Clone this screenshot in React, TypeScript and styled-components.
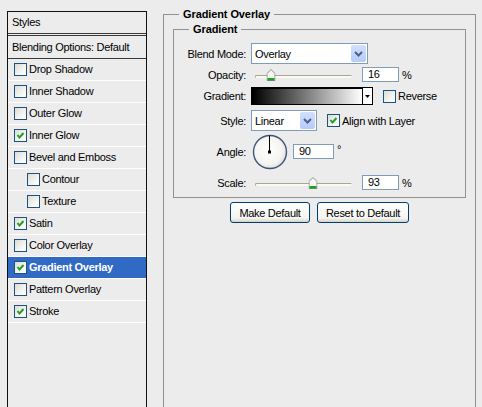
import styled, { createGlobalStyle } from "styled-components";

const GlobalStyle = createGlobalStyle`
  html, body {
    margin: 0;
    padding: 0;
    background: #ececec;
    overflow: hidden;
  }
  body {
    font-family: "Liberation Sans", Arial, sans-serif;
    font-size: 11px;
    letter-spacing: -0.3px;
    color: #000;
  }
  * {
    box-sizing: border-box;
  }
`;

const STYLES = [
  { label: "Drop Shadow", checked: false },
  { label: "Inner Shadow", checked: false },
  { label: "Outer Glow", checked: false },
  { label: "Inner Glow", checked: true },
  { label: "Bevel and Emboss", checked: false },
  { label: "Contour", checked: false, sub: true },
  { label: "Texture", checked: false, sub: true },
  { label: "Satin", checked: true },
  { label: "Color Overlay", checked: false },
  { label: "Gradient Overlay", checked: true, selected: true },
  { label: "Pattern Overlay", checked: false },
  { label: "Stroke", checked: true },
];

// slider value -> percent of track
const pos = (v: number, min: number, max: number) => ((v - min) / (max - min)) * 100;

function Check({ checked }: { checked?: boolean }) {
  return (
    <CheckBox>
      {checked && (
        <svg width="11" height="11" viewBox="0 0 11 11">
          <path d="M2.5 5 L4.5 7.5 L8.5 3" fill="none" stroke="#21a121" strokeWidth="2" />
        </svg>
      )}
    </CheckBox>
  );
}

function DropSelect({ value, width }: { value: string; width: number }) {
  return (
    <Select $w={width}>
      <span>{value}</span>
      <DropButton>
        <svg width="9" height="6" viewBox="0 0 9 6">
          <path d="M1 1 L4.5 4.5 L8 1" fill="none" stroke="#4d6185" strokeWidth="2" />
        </svg>
      </DropButton>
    </Select>
  );
}

function Slider({ percent }: { percent: number }) {
  return (
    <SliderWrap>
      <Track />
      <Thumb style={{ left: `${percent}%` }}>
        <svg width="9" height="12" viewBox="0 0 9 12">
          <path d="M0.5 4.5 L4.5 0.5 L8.5 4.5 L8.5 11.5 L0.5 11.5 Z" fill="#f7f7f2" stroke="#8a8f96" />
          <rect x="1" y="9" width="7" height="2.5" fill="#21a121" />
        </svg>
      </Thumb>
    </SliderWrap>
  );
}

function Dial() {
  return (
    <DialBox>
      <svg width="36" height="36" viewBox="0 0 36 36">
        <defs>
          <radialGradient id="dialFill" cx="45%" cy="45%" r="60%">
            <stop offset="0%" stopColor="#ffffff" />
            <stop offset="70%" stopColor="#f4f4f0" />
            <stop offset="100%" stopColor="#d8d8d4" />
          </radialGradient>
        </defs>
        <circle cx="18" cy="18" r="16.5" fill="url(#dialFill)" stroke="#42537a" strokeWidth="1.4" />
        <line x1="17.5" y1="18" x2="17.5" y2="1.5" stroke="#000" strokeWidth="1" />
        <rect x="16" y="16.5" width="3" height="3" fill="#000" />
      </svg>
    </DialBox>
  );
}

export default function App() {
  return (
    <>
      <GlobalStyle />
      <Dialog>
        <StylesPanel>
          <PanelHeader>Styles</PanelHeader>
          <BlendingRow>Blending Options: Default</BlendingRow>
          {STYLES.map((s) => (
            <StyleRow key={s.label} $sub={!!s.sub} $selected={!!s.selected}>
              <Check checked={s.checked} />
              <span>{s.label}</span>
            </StyleRow>
          ))}
        </StylesPanel>

        <OuterGroup>
          <GroupLegend>Gradient Overlay</GroupLegend>
          <InnerGroup>
            <GroupLegend>Gradient</GroupLegend>

            <FieldRow $h={21} $mt={7}>
              <FieldLabel>Blend Mode:</FieldLabel>
              <DropSelect value="Overlay" width={117} />
            </FieldRow>

            <FieldRow $h={17} $mt={2}>
              <FieldLabel>Opacity:</FieldLabel>
              <Slider percent={pos(16, 0, 100)} />
              <NumberBox>16</NumberBox>
              <Unit>%</Unit>
            </FieldRow>

            <FieldRow $h={18} $mt={4}>
              <FieldLabel>Gradient:</FieldLabel>
              <GradientBox>
                <GradientFill />
                <GradientArrow>
                  <svg width="5" height="3" viewBox="0 0 5 3">
                    <path d="M0 0 H5 L2.5 3 Z" fill="#000" />
                  </svg>
                </GradientArrow>
              </GradientBox>
              <CheckLabel $ml={10}>
                <Check />
                <span>Reverse</span>
              </CheckLabel>
            </FieldRow>

            <FieldRow $h={21} $mt={5}>
              <FieldLabel>Style:</FieldLabel>
              <DropSelect value="Linear" width={66} />
              <CheckLabel $ml={10}>
                <Check checked />
                <span>Align with Layer</span>
              </CheckLabel>
            </FieldRow>

            <FieldRow $h={35} $mt={3}>
              <FieldLabel>Angle:</FieldLabel>
              <Dial />
              <NumberBox $w={41} $ml={5}>
                90
              </NumberBox>
              <Degree>°</Degree>
            </FieldRow>

            <FieldRow $h={17} $mt={5}>
              <FieldLabel>Scale:</FieldLabel>
              <Slider percent={pos(93, 10, 150)} />
              <NumberBox>93</NumberBox>
              <Unit>%</Unit>
            </FieldRow>
          </InnerGroup>

          <ButtonRow>
            <DialogButton $w={80}>Make Default</DialogButton>
            <DialogButton $w={92}>Reset to Default</DialogButton>
          </ButtonRow>
        </OuterGroup>
      </Dialog>
    </>
  );
}

const Dialog = styled.div`
  display: flex;
  align-items: flex-start;
  height: 407px;
  overflow: hidden;
`;

const StylesPanel = styled.div`
  margin: 11px 0 0 7px;
  width: 140px;
  height: 410px;
  flex-shrink: 0;
  border: 1px solid #111;
  border-bottom: none;
`;

const PanelHeader = styled.div`
  height: 24px;
  display: flex;
  align-items: center;
  padding: 0 0 1px 4px;
  border-bottom: 3px double #3a3a3a;
`;

const BlendingRow = styled.div`
  height: 23px;
  display: flex;
  align-items: center;
  padding: 0 0 1px 4px;
  border-bottom: 1px solid #3a3a3a;
`;

const StyleRow = styled.div<{ $sub: boolean; $selected: boolean }>`
  height: 22px;
  display: flex;
  align-items: center;
  gap: 2px;
  padding: 0 0 1px ${(p) => (p.$sub ? 19 : 6)}px;
  border-bottom: 1px solid #fff;
  background: ${(p) => (p.$selected ? "#316ac5" : "transparent")};
  color: ${(p) => (p.$selected ? "#fff" : "#000")};
  font-weight: ${(p) => (p.$selected ? "bold" : "normal")};
`;

const CheckBox = styled.span`
  width: 13px;
  height: 13px;
  flex-shrink: 0;
  display: flex;
  align-items: center;
  justify-content: center;
  border: 1px solid #1c5180;
  background: linear-gradient(135deg, #dcdcd7 0%, #f4f4f0 60%, #ffffff 100%);
`;

const OuterGroup = styled.fieldset`
  margin: 8px 0 0 16px;
  padding: 0;
  width: 313px;
  height: 420px;
  flex-shrink: 0;
  border: 1px solid #919191;
  min-inline-size: 0;
`;

const GroupLegend = styled.legend`
  margin-left: 15px;
  padding: 0 4px;
  font-weight: bold;
  line-height: 13px;
  letter-spacing: -0.1px;
`;

const InnerGroup = styled.fieldset`
  margin: 2px 9px 0;
  padding: 0 0 6px 0;
  border: 1px solid #919191;
  min-inline-size: 0;
`;

const FieldRow = styled.div<{ $h: number; $mt: number }>`
  display: flex;
  align-items: center;
  height: ${(p) => p.$h}px;
  margin-top: ${(p) => p.$mt}px;
`;

const FieldLabel = styled.span`
  width: 72px;
  flex-shrink: 0;
  margin-right: 5px;
  text-align: right;
`;

const Select = styled.div<{ $w: number }>`
  width: ${(p) => p.$w}px;
  height: 21px;
  display: flex;
  align-items: center;
  padding-left: 3px;
  background: #fff;
  border: 1px solid #7f9db9;
`;

const DropButton = styled.span`
  margin-left: auto;
  margin-right: 1px;
  width: 15px;
  height: 17px;
  display: flex;
  align-items: center;
  justify-content: center;
  border-radius: 2px;
  background: linear-gradient(#d2e0fd, #b6cbf7);
`;

const SliderWrap = styled.div`
  position: relative;
  align-self: stretch;
  width: 97px;
  margin-left: 4px;
`;

const Track = styled.div`
  margin-top: 9px;
  height: 3px;
  border-radius: 2px;
  background: #fbfaf2;
  border-top: 1px solid #a8a69a;
  border-left: 1px solid #a8a69a;
`;

const Thumb = styled.span`
  position: absolute;
  top: 3px;
  display: block;
  height: 12px;
  transform: translateX(-50%);
  line-height: 0;
`;

const NumberBox = styled.div<{ $w?: number; $ml?: number }>`
  width: ${(p) => p.$w ?? 37}px;
  height: 15px;
  margin-left: ${(p) => p.$ml ?? 10}px;
  padding-left: 5px;
  line-height: 13px;
  background: #fff;
  border: 1px solid #7f9db9;
`;

const Unit = styled.span`
  margin-left: 3px;
`;

const Degree = styled.span`
  align-self: flex-start;
  margin: 9px 0 0 3px;
`;

const GradientBox = styled.div`
  width: 122px;
  height: 18px;
  display: flex;
  border: 1px solid #000;
  box-shadow: inset 1px 1px 0 #000;
`;

const GradientFill = styled.div`
  flex: 1;
  margin: 1px 0 0 1px;
  background: linear-gradient(to right, #000, #fff);
`;

const GradientArrow = styled.div`
  width: 10px;
  display: flex;
  align-items: center;
  justify-content: center;
  background: #fff;
  border-left: 1px solid #000;
`;

const CheckLabel = styled.label<{ $ml: number }>`
  display: flex;
  align-items: center;
  gap: 2px;
  margin-left: ${(p) => p.$ml}px;
`;

const DialBox = styled.div`
  width: 36px;
  height: 36px;
  margin-left: 1px;
  line-height: 0;
`;

const ButtonRow = styled.div`
  display: flex;
  justify-content: center;
  gap: 7px;
  margin-top: 4px;
`;

const DialogButton = styled.button<{ $w: number }>`
  width: ${(p) => p.$w}px;
  height: 21px;
  padding: 0;
  font: inherit;
  letter-spacing: inherit;
  color: #000;
  border: 1px solid #003c74;
  border-radius: 3px;
  background: linear-gradient(#ffffff, #f4f4f0 80%, #d8d2c6);
`;
